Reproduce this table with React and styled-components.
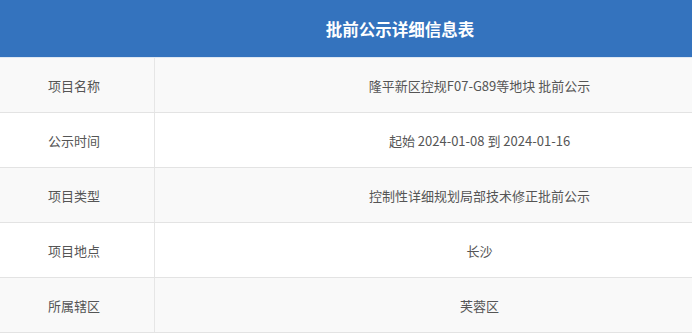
import React from "react";
import styled, { createGlobalStyle } from "styled-components";

const Global = createGlobalStyle`
  html, body { margin: 0; padding: 0; background: #fff; overflow: hidden; }
  body { font-family: "Noto Sans CJK SC", "Noto Sans", "Liberation Sans", sans-serif; }
`;

const Frame = styled.div`
  width: 100%;
  overflow: hidden;
`;

const Table = styled.div`
  width: 800px;
  display: flex;
  flex-direction: column;
`;

const Header = styled.div`
  height: 57px;
  background: #3473be;
  border-bottom: 1px solid #dfe8f3;
  display: flex;
  align-items: center;
  justify-content: center;
  color: #fff;
  font-size: 16.5px;
  font-weight: 700;
`;

const Row = styled.div`
  display: grid;
  grid-template-columns: 155px 1fr;
  height: 54px;
  border-bottom: 1px solid #e3e3e3;
  background: ${(p) => (p.$alt ? "#f9f9f9" : "#ffffff")};
`;

const Label = styled.div`
  display: flex;
  align-items: center;
  justify-content: center;
  padding-right: 6px;
  border-right: 1px solid #e6e6e6;
  color: #555;
  font-size: 13px;
`;

const Value = styled.div`
  display: flex;
  align-items: center;
  justify-content: center;
  color: #555;
  font-size: 13px;
  padding-left: 4px;
`;

const rows = [
  ["项目名称", "隆平新区控规F07-G89等地块 批前公示"],
  ["公示时间", "起始 2024-01-08 到 2024-01-16"],
  ["项目类型", "控制性详细规划局部技术修正批前公示"],
  ["项目地点", "长沙"],
  ["所属辖区", "芙蓉区"],
];

export default function App() {
  return (
    <>
      <Global />
      <Frame>
        <Table>
          <Header>批前公示详细信息表</Header>
          {rows.map(([k, v], i) => (
            <Row key={k} $alt={i % 2 === 0}>
              <Label>{k}</Label>
              <Value>{v}</Value>
            </Row>
          ))}
        </Table>
      </Frame>
    </>
  );
}
